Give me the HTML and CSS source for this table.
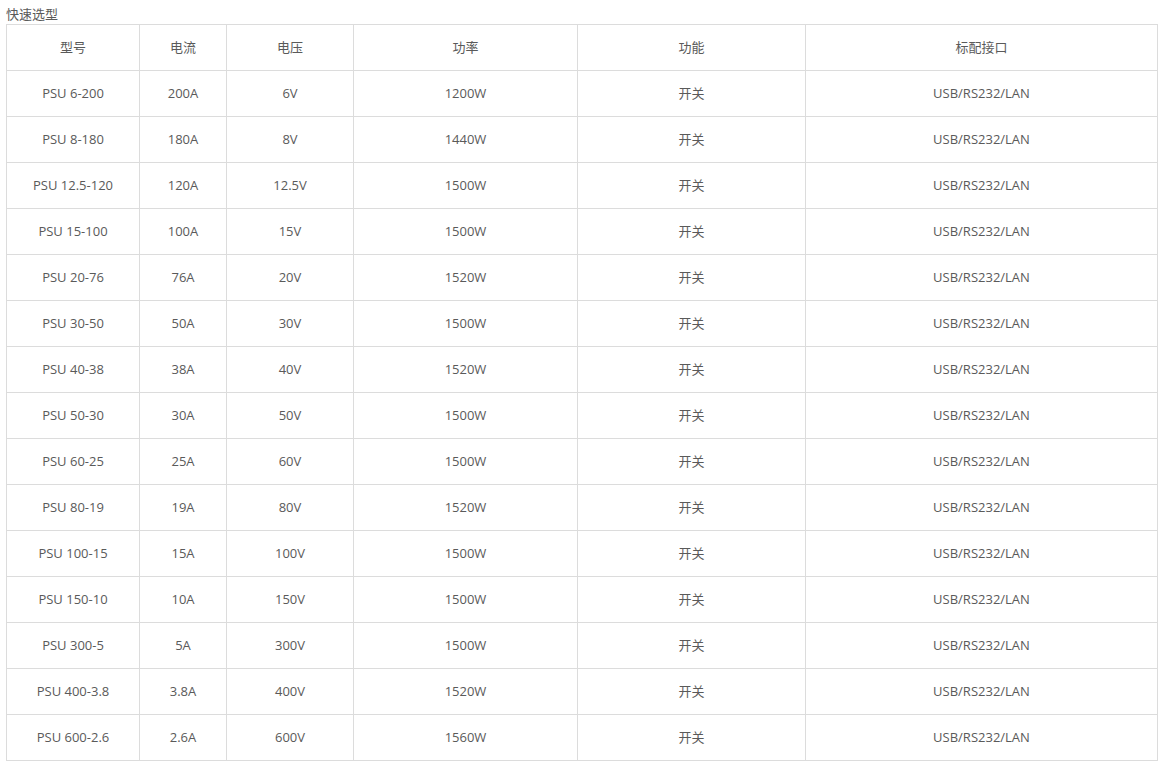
FILE: index.html
```html
<!DOCTYPE html>
<html lang="zh-CN">
<head>
<meta charset="utf-8">
<title>快速选型</title>
<link rel="stylesheet" href="styles.css">
</head>
<body>
<div class="page">
  <div class="title">快速选型</div>
  <table class="spec">
    <colgroup>
      <col class="c1"><col class="c2"><col class="c3"><col class="c4"><col class="c5"><col class="c6">
    </colgroup>
    <thead>
      <tr><th>型号</th><th>电流</th><th>电压</th><th>功率</th><th>功能</th><th>标配接口</th></tr>
    </thead>
    <tbody>
      <tr><td>PSU 6-200</td><td>200A</td><td>6V</td><td>1200W</td><td>开关</td><td>USB/RS232/LAN</td></tr>
      <tr><td>PSU 8-180</td><td>180A</td><td>8V</td><td>1440W</td><td>开关</td><td>USB/RS232/LAN</td></tr>
      <tr><td>PSU 12.5-120</td><td>120A</td><td>12.5V</td><td>1500W</td><td>开关</td><td>USB/RS232/LAN</td></tr>
      <tr><td>PSU 15-100</td><td>100A</td><td>15V</td><td>1500W</td><td>开关</td><td>USB/RS232/LAN</td></tr>
      <tr><td>PSU 20-76</td><td>76A</td><td>20V</td><td>1520W</td><td>开关</td><td>USB/RS232/LAN</td></tr>
      <tr><td>PSU 30-50</td><td>50A</td><td>30V</td><td>1500W</td><td>开关</td><td>USB/RS232/LAN</td></tr>
      <tr><td>PSU 40-38</td><td>38A</td><td>40V</td><td>1520W</td><td>开关</td><td>USB/RS232/LAN</td></tr>
      <tr><td>PSU 50-30</td><td>30A</td><td>50V</td><td>1500W</td><td>开关</td><td>USB/RS232/LAN</td></tr>
      <tr><td>PSU 60-25</td><td>25A</td><td>60V</td><td>1500W</td><td>开关</td><td>USB/RS232/LAN</td></tr>
      <tr><td>PSU 80-19</td><td>19A</td><td>80V</td><td>1520W</td><td>开关</td><td>USB/RS232/LAN</td></tr>
      <tr><td>PSU 100-15</td><td>15A</td><td>100V</td><td>1500W</td><td>开关</td><td>USB/RS232/LAN</td></tr>
      <tr><td>PSU 150-10</td><td>10A</td><td>150V</td><td>1500W</td><td>开关</td><td>USB/RS232/LAN</td></tr>
      <tr><td>PSU 300-5</td><td>5A</td><td>300V</td><td>1500W</td><td>开关</td><td>USB/RS232/LAN</td></tr>
      <tr><td>PSU 400-3.8</td><td>3.8A</td><td>400V</td><td>1520W</td><td>开关</td><td>USB/RS232/LAN</td></tr>
      <tr><td>PSU 600-2.6</td><td>2.6A</td><td>600V</td><td>1560W</td><td>开关</td><td>USB/RS232/LAN</td></tr>
    </tbody>
  </table>
</div>
</body>
</html>
```

FILE: styles.css
```css
html, body {
  margin: 0;
  padding: 0;
  background: #fff;
}
body {
  font-family: "Open Sans", "Noto Sans CJK SC", sans-serif;
  font-size: 13px;
  color: #5a5a5a;
}
.page {
  padding: 6px 7px 0 6px;
}
.title {
  height: 18px;
  line-height: 16px;
  color: #5a5a5a;
}
.spec {
  border-collapse: collapse;
  table-layout: fixed;
  width: 1152px;
}
.spec .c1 { width: 133px; }
.spec .c2 { width: 87px; }
.spec .c3 { width: 127px; }
.spec .c4 { width: 224px; }
.spec .c5 { width: 228px; }
.spec .c6 { width: 352px; }
.spec th,
.spec td {
  border: 1px solid #dcdcdc;
  height: 44px;
  padding: 0 0 1px 0;
  text-align: center;
  vertical-align: middle;
  font-weight: normal;
  color: #5a5a5a;
  line-height: 20px;
}
```
